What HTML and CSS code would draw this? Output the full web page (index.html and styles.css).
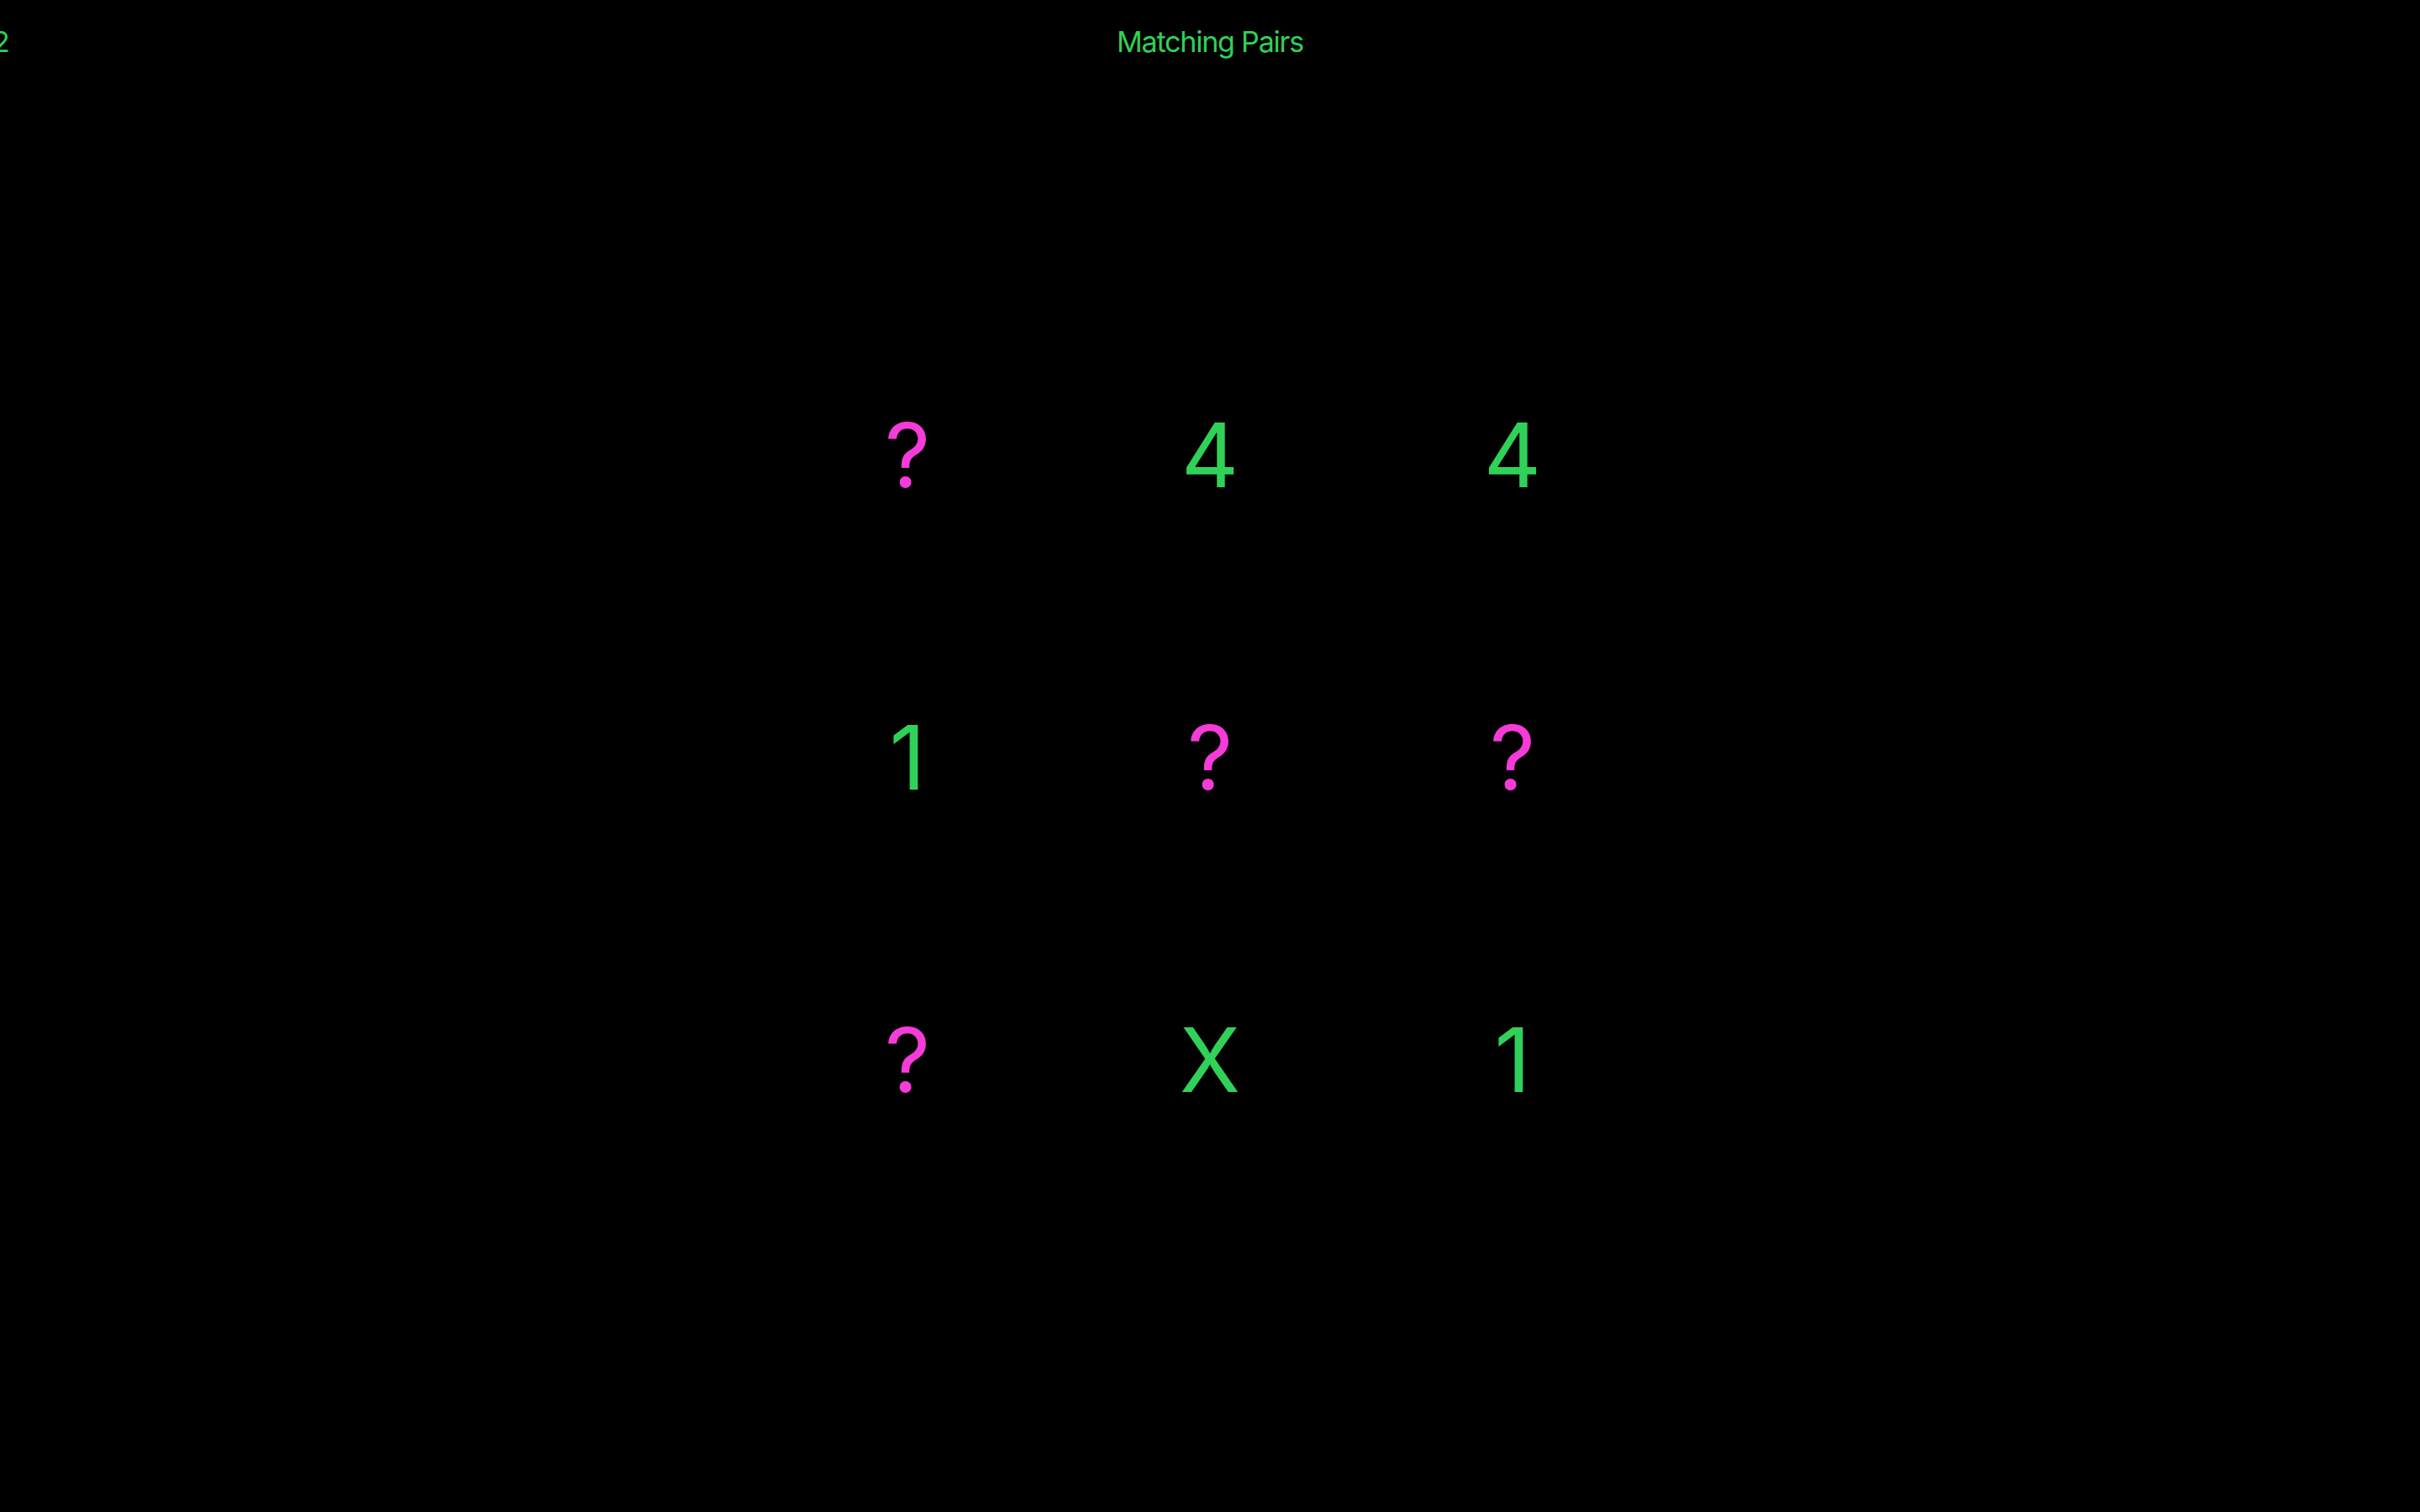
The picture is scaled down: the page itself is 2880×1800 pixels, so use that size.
FILE: index.html
```html
<!DOCTYPE html>
<html lang="en">
<head>
<meta charset="utf-8">
<title>Matching Pairs</title>
<link rel="stylesheet" href="styles.css">
</head>
<body>
<div class="app">
  <header class="header">
    <span class="score">2</span>
    <h1 class="title">Matching Pairs</h1>
  </header>
  <main class="stage">
    <div class="board">
      <div class="card hidden">?</div>
      <div class="card shown">4</div>
      <div class="card shown">4</div>
      <div class="card shown">1</div>
      <div class="card hidden">?</div>
      <div class="card hidden">?</div>
      <div class="card hidden">?</div>
      <div class="card shown">X</div>
      <div class="card shown">1</div>
    </div>
  </main>
</div>
</body>
</html>
```
FILE: styles.css
```css
html, body {
  margin: 0;
  padding: 0;
  background: #000;
}
body {
  font-family: Inter, "Noto Sans", sans-serif;
  color: #30d158;
  overflow: hidden;
}
.app {
  width: 2880px;
  height: 1800px;
  display: flex;
  flex-direction: column;
}
.header {
  height: 120px;
  box-sizing: border-box;
  padding-top: 29px;
  display: grid;
  grid-template-columns: 1fr auto 1fr;
  align-items: start;
  font-size: 34px;
  line-height: 41px;
}
.score {
  margin-left: -9px;
  justify-self: start;
}
.title {
  margin: 0;
  font-size: 34px;
  font-weight: 400;
  line-height: 41px;
  letter-spacing: -1.2px;
}
.stage {
  flex: 1;
  display: flex;
  align-items: center;
  justify-content: center;
  padding-bottom: 116px;
}
.board {
  display: grid;
  grid-template-columns: repeat(3, 360px);
  grid-template-rows: repeat(3, 360px);
}
.card {
  display: flex;
  align-items: center;
  justify-content: center;
  font-size: 106px;
  line-height: 1;
}
.shown {
  color: #30d158;
}
.hidden {
  color: #f53bd8;
}
```
